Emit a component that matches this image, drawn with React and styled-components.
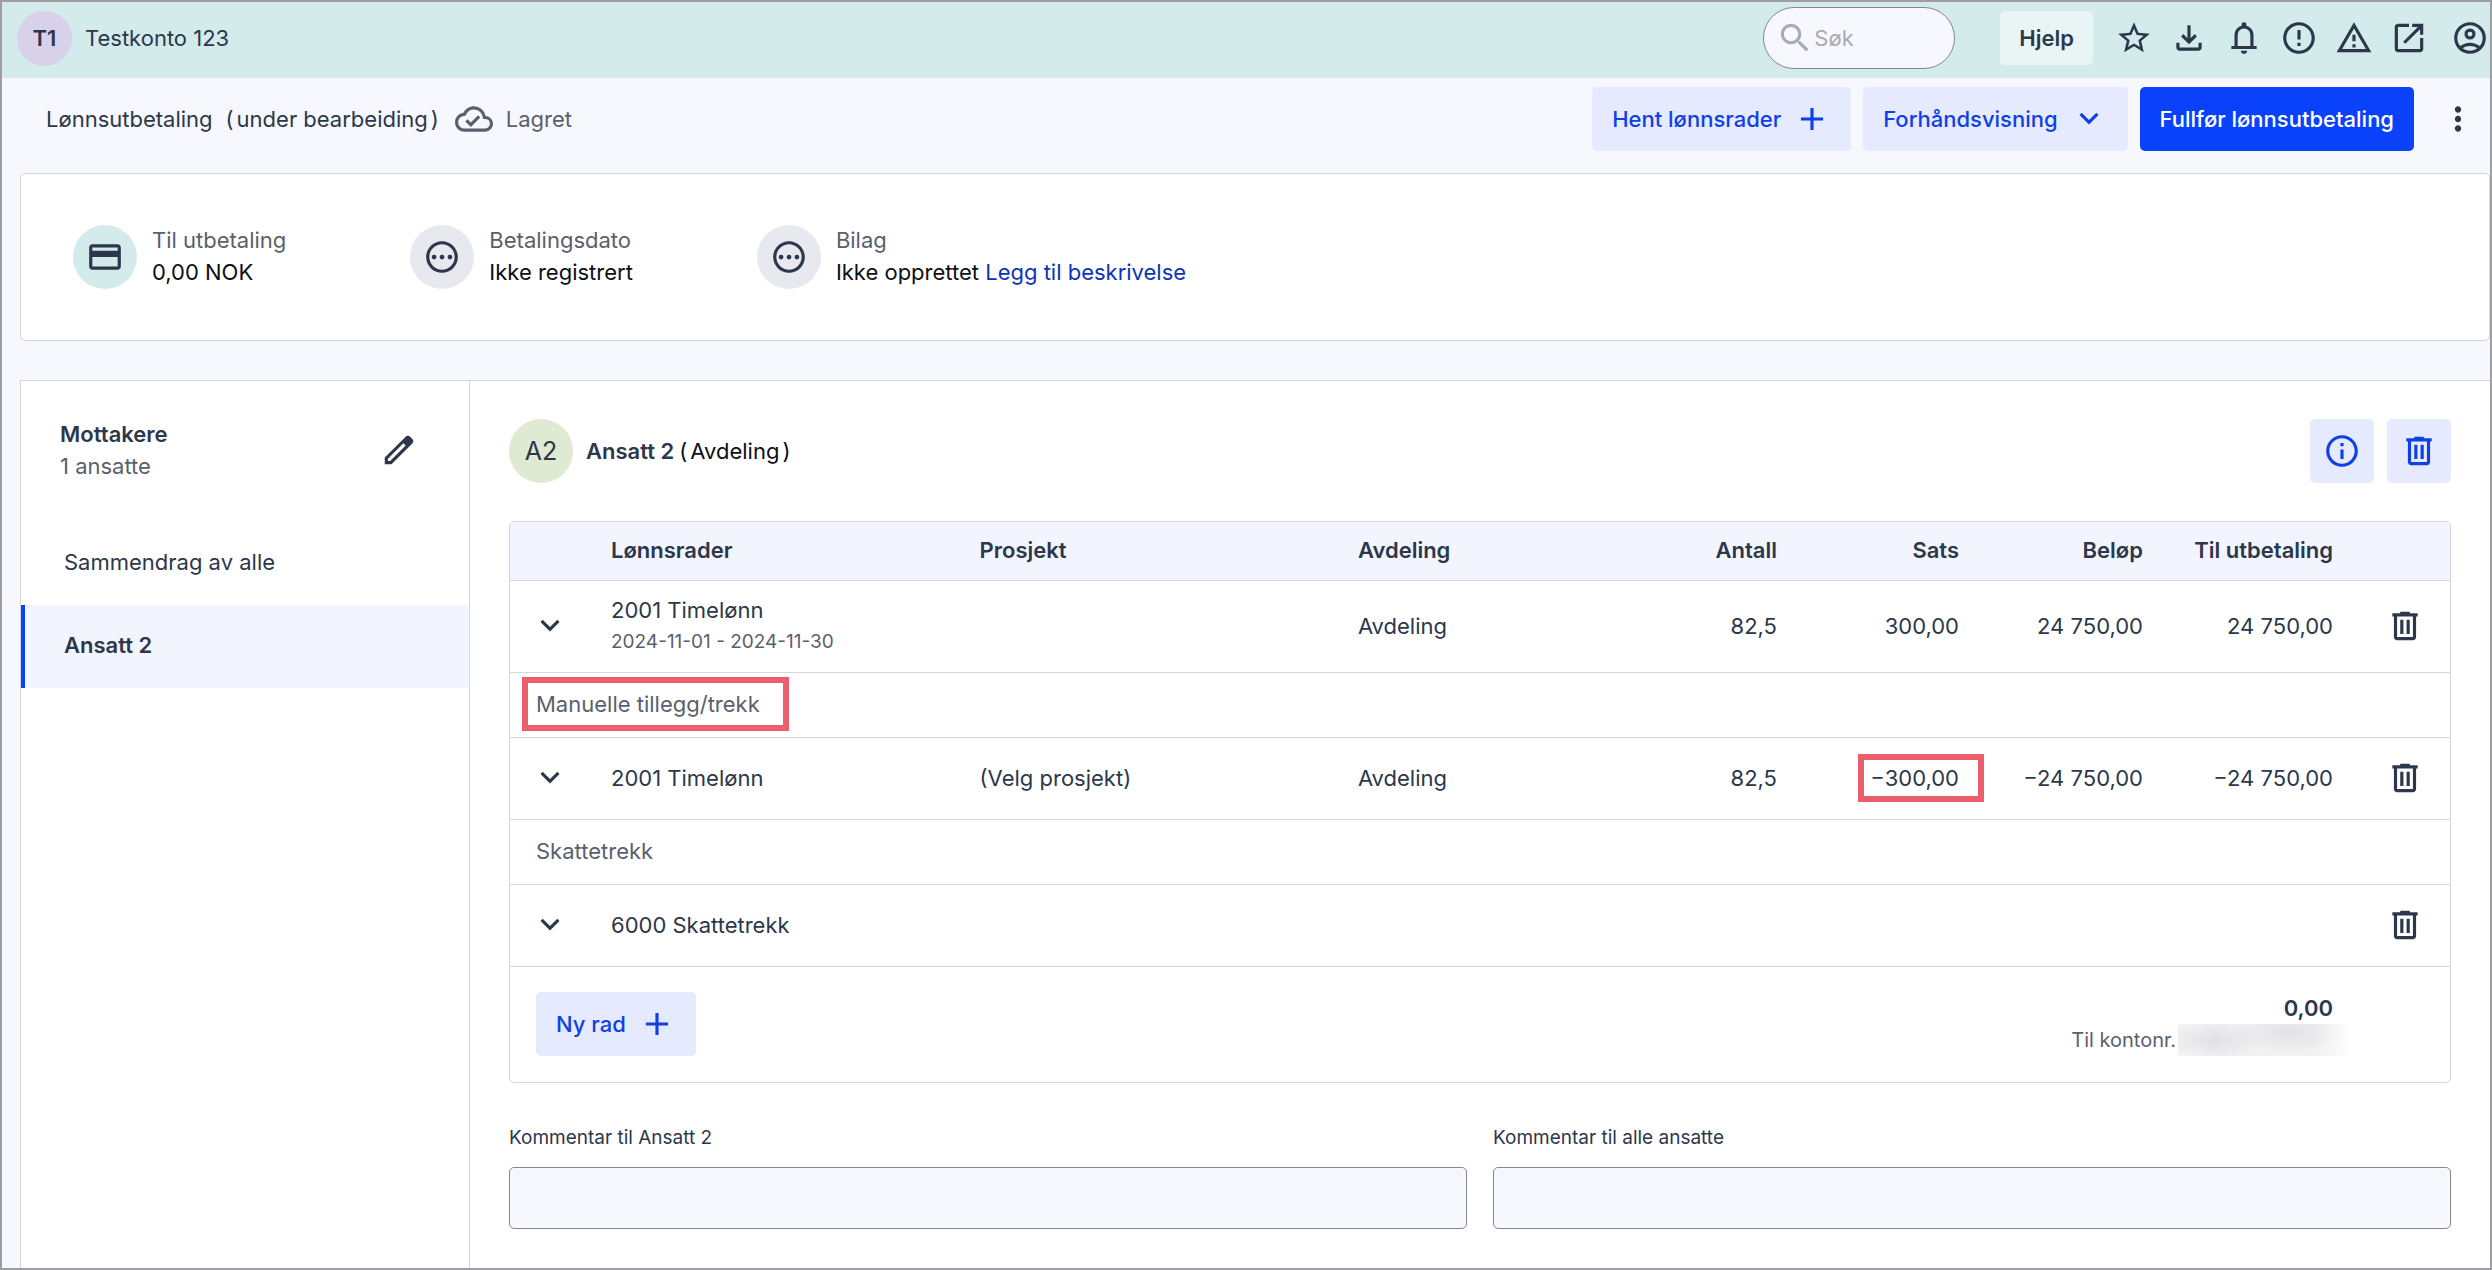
import React from "react";
import styled, { createGlobalStyle, css } from "styled-components";
import {
  MdAdd,
  MdErrorOutline,
  MdInfoOutline,
  MdMoreVert,
  MdOutlineCloudDone,
  MdOutlineCreditCard,
  MdOutlinePending,
  MdSearch,
  MdStarOutline,
  MdOutlineWarningAmber,
} from "react-icons/md";

const c = {
  ink: "#2c374b",
  muted: "#5a5f6d",
  black: "#0d0f14",
  blue: "#0a41fa",
  blueText: "#0f3fe6",
  blueSoft: "#e6eafe",
  line: "#d5d6dc",
  page: "#f7f8fd",
  head: "#f3f5fe",
  mint: "#d3ebea",
  frame: "#9e9da1",
  mark: "#eb5f6c",
};

const GlobalStyle = createGlobalStyle`
  *, *::before, *::after { box-sizing: border-box; }
  body {
    margin: 0;
    background: ${c.page};
    color: ${c.ink};
    font: 400 22px/32px Inter, Roboto, "Noto Sans", sans-serif;
  }
  button, input { font: inherit; color: inherit; }
  button { border: 0; background: none; padding: 0; cursor: pointer; }
  svg { display: block; flex: none; }
`;

const paths = {
  download:
    "M12 16l-5-5 1.4-1.45 2.6 2.6V4h2v8.15l2.6-2.6L17 11l-5 5Zm-6 4q-.825 0-1.413-.587T4 18v-3h2v3h12v-3h2v3q0 .825-.587 1.413T18 20H6Z",
  bell: "M4 19v-2h2v-7q0-2.075 1.25-3.688T10.5 4.2v-.7q0-.625.438-1.062T12 2t1.063.438T13.5 3.5v.7q2 .5 3.25 2.113T18 10v7h2v2H4Zm8 3q-.825 0-1.412-.587T10 20h4q0 .825-.587 1.413T12 22ZM8 17h8v-7q0-1.65-1.175-2.825T12 6T9.175 7.175T8 10v7Z",
  open: "M5 21q-.825 0-1.413-.587T3 19V5q0-.825.588-1.413T5 3h7v2H5v14h14v-7h2v7q0 .825-.587 1.413T19 21H5Zm4.7-5.3-1.4-1.4L17.6 5H14V3h7v7h-2V6.4l-9.3 9.3Z",
  account:
    "M5.85 17.1q1.275-.975 2.85-1.537T12 15t3.3.563T18.15 17.1q.875-1.025 1.363-2.325T20 12q0-3.325-2.337-5.663T12 4T6.338 6.338T4 12q0 1.475.488 2.775T5.85 17.1ZM12 13q-1.475 0-2.488-1.012T8.5 9.5t1.013-2.488T12 6t2.488 1.013T15.5 9.5t-1.012 2.488T12 13Zm0 9q-2.075 0-3.9-.788t-3.175-2.137T2.788 15.9T2 12t.788-3.9t2.137-3.175T8.1 2.788T12 2t3.9.788t3.175 2.137T21.213 8.1T22 12t-.788 3.9t-2.137 3.175t-3.175 2.138T12 22Zm0-2q1.325 0 2.5-.387t2.15-1.113q-.975-.725-2.15-1.112T12 17t-2.5.388T7.35 18.5q.975.725 2.15 1.113T12 20Zm0-9q.65 0 1.075-.425T13.5 9.5t-.425-1.075T12 8t-1.075.425T10.5 9.5t.425 1.075T12 11Z",
  edit: "M5 19h1.425L16.2 9.225 14.775 7.8 5 17.575V19Zm-2 2v-4.25L16.2 3.575q.3-.275.663-.425t.762-.15.775.15.65.45L20.425 5q.3.275.438.65T21 6.4q0 .4-.138.763t-.437.662L7.25 21H3Z",
  trash:
    "M7 21q-.825 0-1.413-.587T5 19V6H4V4h5V3h6v1h5v2h-1v13q0 .825-.587 1.413T17 21H7ZM17 6H7v13h10V6ZM9 17h2V8H9v9Zm4 0h2V8h-2v9Z",
  chevron: "m12 15.4-6-6L7.4 8l4.6 4.6L16.6 8 18 9.4l-6 6Z",
};

const Icon = ({ name, size = 38 }) => (
  <svg width={size} height={size} viewBox="0 0 24 24" fill="currentColor" aria-hidden="true">
    <path d={paths[name]} />
  </svg>
);

const Frame = styled.div`
  min-height: 100vh;
  display: flex;
  flex-direction: column;
  border: 2px solid ${c.frame};
`;

const TopBar = styled.header`
  display: flex;
  align-items: center;
  justify-content: space-between;
  height: 76px;
  padding: 0 1px 4px 15px;
  background: ${c.mint};
`;

const Cluster = styled.div`
  display: flex;
  align-items: center;
  gap: ${(p) => p.$gap || 12}px;
`;

const Avatar = styled.span`
  display: grid;
  place-items: center;
  flex: none;
  width: ${(p) => p.$size}px;
  height: ${(p) => p.$size}px;
  border-radius: 50%;
  background: ${(p) => p.$tint};
  color: ${c.ink};
  font-size: ${(p) => p.$font || 22}px;
  font-weight: ${(p) => p.$weight || 500};
`;

const SearchBox = styled.label`
  display: flex;
  align-items: center;
  width: 192px;
  height: 62px;
  margin-right: 28px;
  padding: 0 12px;
  border: 1px solid #85868f;
  border-radius: 31px;
  background: ${c.page};
  color: #a9abb3;
`;

const SearchInput = styled.input`
  width: 100%;
  min-width: 0;
  padding: 0;
  border: 0;
  outline: 0;
  background: none;
  &::placeholder { color: #a9abb3; opacity: 1; }
`;

const HelpButton = styled.button`
  height: 54px;
  margin-right: 5px;
  padding: 0 19px;
  border-radius: 5px;
  background: #e9f5f5;
  font-weight: 600;
`;

const IconButton = styled.button`
  display: grid;
  place-items: center;
  color: ${c.ink};
  ${(p) => p.$last && css`margin-left: 6px;`}
`;

const SubHeader = styled.div`
  display: flex;
  align-items: center;
  justify-content: space-between;
  padding: 9px 0 0 44px;
`;

const Title = styled.h1`
  margin: 0;
  font-size: 22px;
  line-height: 32px;
  font-weight: 400;
`;

const ParenText = styled.span`
  display: inline-flex;
  gap: 3px;
  color: ${(p) => (p.$dark ? c.black : c.ink)};
`;

const Saved = styled.span`
  display: flex;
  align-items: center;
  gap: 13px;
  color: ${c.muted};
`;

const Button = styled.button`
  display: flex;
  align-items: center;
  gap: 12px;
  height: 64px;
  padding: 0 20px;
  border-radius: 5px;
  background: ${(p) => (p.$primary ? c.blue : c.blueSoft)};
  color: ${(p) => (p.$primary ? "#fff" : c.blueText)};
  font-weight: 500;
  white-space: nowrap;
`;

const SquareButton = styled(Button)`
  justify-content: center;
  width: 64px;
  padding: 0;
  ${(p) => p.$plain && css`background: none; color: ${c.ink};`}
`;

const Summary = styled.section`
  display: flex;
  align-items: center;
  gap: 124px;
  height: 168px;
  margin: 22px 0 39px 18px;
  padding: 0 52px;
  border: 1px solid ${c.line};
  border-radius: 5px;
  background: #fff;
`;

const SummaryText = styled.div`
  padding-bottom: 2px;
`;

const Muted = styled.div`
  color: ${c.muted};
`;

const Strong = styled.div`
  color: ${c.black};
`;

const Link = styled.a`
  color: #0b34b8;
  text-decoration: none;
`;

const Panel = styled.div`
  flex: 1;
  display: grid;
  grid-template-columns: 449px minmax(0, 1fr);
  margin-left: 18px;
  border: solid ${c.line};
  border-width: 1px 0 0 1px;
  background: #fff;
`;

const Sidebar = styled.aside`
  border-right: 1px solid ${c.line};
`;

const SideHead = styled.div`
  display: flex;
  align-items: center;
  justify-content: space-between;
  height: 141px;
  padding: 0 51px 3px 39px;
`;

const Heading = styled.h2`
  margin: 0;
  font-size: 22px;
  line-height: 32px;
  font-weight: 600;
`;

const SideItem = styled.button`
  display: block;
  width: 100%;
  height: 83px;
  padding: 0 39px 3px;
  border-left: 4px solid ${(p) => (p.$active ? c.blue : "transparent")};
  background: ${(p) => (p.$active ? c.head : "none")};
  font-weight: ${(p) => (p.$active ? 600 : 400)};
  text-align: left;
`;

const Content = styled.main`
  padding: 38px 39px;
`;

const EmployeeHead = styled.div`
  display: flex;
  align-items: center;
  justify-content: space-between;
  margin-bottom: 38px;
`;

const TableWrap = styled.div`
  border: 1px solid ${c.line};
  border-radius: 5px;
  overflow: hidden;
`;

const Table = styled.table`
  width: 100%;
  table-layout: fixed;
  border-collapse: collapse;
`;

const cellBase = css`
  padding: 0 17px;
  text-align: ${(p) => (p.$num ? "right" : "left")};
  white-space: nowrap;
`;

const Th = styled.th`
  ${cellBase}
  padding-bottom: 2px;
  background: ${c.head};
  font-weight: 600;
`;

const Td = styled.td`
  ${cellBase}
`;

const GroupCell = styled.td`
  padding: 0 26px 2px;
  color: ${c.muted};
`;

const ExpandCell = styled.td`
  padding: 0 4px 0 0;
`;

const DeleteCell = styled.td`
  padding: 0 0 0 10px;
`;

const Row = styled.tr`
  height: ${(p) => p.$h}px;
  border-bottom: 1px solid ${c.line};
`;

const Small = styled.div`
  color: ${c.muted};
  font-size: 19px;
`;

const Centered = styled.div`
  display: flex;
  justify-content: center;
`;

const Marked = styled.span`
  position: relative;
  &::after {
    content: "";
    position: absolute;
    inset: ${(p) => p.$inset};
    border: 6px solid ${c.mark};
    pointer-events: none;
  }
`;

const TableFoot = styled.div`
  display: flex;
  justify-content: space-between;
  align-items: center;
  height: 115px;
  padding: 0 117px 0 26px;
`;

const Total = styled.div`
  text-align: right;
  font-weight: 600;
`;

const AccountLine = styled.div`
  display: flex;
  align-items: center;
  gap: 2px;
  margin-right: -14px;
  color: ${c.muted};
  font-size: 20px;
  font-weight: 400;
`;

const Redacted = styled.span`
  width: 169px;
  height: 32px;
  background:
    radial-gradient(ellipse 55px 22px at 66% 25%, rgba(222, 222, 226, 0.8), transparent),
    radial-gradient(ellipse 50px 20px at 22% 50%, rgba(222, 222, 226, 0.9), transparent),
    linear-gradient(90deg, #f4f4f5, #f1f1f2 80%, #fcfcfc);
`;

const Comments = styled.div`
  display: grid;
  grid-template-columns: 1fr 1fr;
  gap: 26px;
  margin-top: 39px;
`;

const CommentLabel = styled.label`
  display: block;
  font-size: 19px;
  line-height: 32px;
`;

const CommentInput = styled.input`
  display: block;
  width: 100%;
  height: 62px;
  margin-top: 13px;
  padding: 0 16px;
  border: 1px solid #85868f;
  border-radius: 5px;
  background: ${c.page};
`;

const Paren = ({ dark, children }) => (
  <ParenText $dark={dark}>
    <span>(</span>
    <span>{children}</span>
    <span>)</span>
  </ParenText>
);

const SummaryItem = ({ tint, icon, label, children }) => (
  <Cluster $gap={15}>
    <Avatar $size={64} $tint={tint}>{icon}</Avatar>
    <SummaryText>
      <Muted>{label}</Muted>
      <Strong>{children}</Strong>
    </SummaryText>
  </Cluster>
);

const Expand = () => (
  <ExpandCell>
    <Centered>
      <IconButton aria-label="Vis detaljer"><Icon name="chevron" /></IconButton>
    </Centered>
  </ExpandCell>
);

const Delete = () => (
  <DeleteCell>
    <Centered>
      <IconButton aria-label="Slett rad"><Icon name="trash" /></IconButton>
    </Centered>
  </DeleteCell>
);

const Col = styled.col`
  width: ${(p) => p.$w};
`;

export default function App() {
  return (
    <>
      <GlobalStyle />
      <Frame>
        <TopBar>
          <Cluster $gap={13}>
            <Avatar $size={55} $tint="#d9d1e9" $weight={600}>T1</Avatar>
            <span>Testkonto 123</span>
          </Cluster>
          <Cluster $gap={17}>
            <SearchBox>
              <MdSearch size={38} />
              <SearchInput type="search" placeholder="Søk" aria-label="Søk" />
            </SearchBox>
            <HelpButton>Hjelp</HelpButton>
            <IconButton aria-label="Favoritter"><MdStarOutline size={38} /></IconButton>
            <IconButton aria-label="Last ned"><Icon name="download" /></IconButton>
            <IconButton aria-label="Varsler"><Icon name="bell" /></IconButton>
            <IconButton aria-label="Meldinger"><MdErrorOutline size={38} /></IconButton>
            <IconButton aria-label="Advarsler"><MdOutlineWarningAmber size={38} /></IconButton>
            <IconButton aria-label="Åpne"><Icon name="open" /></IconButton>
            <IconButton $last aria-label="Konto"><Icon name="account" /></IconButton>
          </Cluster>
        </TopBar>

        <SubHeader>
          <Cluster $gap={16}>
            <Cluster $gap={13}>
              <Title>Lønnsutbetaling</Title>
              <Paren>under bearbeiding</Paren>
            </Cluster>
            <Saved><MdOutlineCloudDone size={38} />Lagret</Saved>
          </Cluster>
          <Cluster $gap={12}>
            <Button>Hent lønnsrader<MdAdd size={38} /></Button>
            <Button>Forhåndsvisning<Icon name="chevron" /></Button>
            <Button $primary>Fullfør lønnsutbetaling</Button>
            <SquareButton $plain aria-label="Flere valg"><MdMoreVert size={38} /></SquareButton>
          </Cluster>
        </SubHeader>

        <Summary>
          <SummaryItem tint={c.mint} icon={<MdOutlineCreditCard size={38} />} label="Til utbetaling">
            0,00 NOK
          </SummaryItem>
          <SummaryItem tint="#e8e9ee" icon={<MdOutlinePending size={38} />} label="Betalingsdato">
            Ikke registrert
          </SummaryItem>
          <SummaryItem tint="#e8e9ee" icon={<MdOutlinePending size={38} />} label="Bilag">
            Ikke opprettet <Link href="#beskrivelse">Legg til beskrivelse</Link>
          </SummaryItem>
        </Summary>

        <Panel>
          <Sidebar>
            <SideHead>
              <div>
                <Heading>Mottakere</Heading>
                <Muted>1 ansatte</Muted>
              </div>
              <IconButton aria-label="Rediger mottakere"><Icon name="edit" /></IconButton>
            </SideHead>
            <SideItem>Sammendrag av alle</SideItem>
            <SideItem $active>Ansatt 2</SideItem>
          </Sidebar>

          <Content>
            <EmployeeHead>
              <Cluster $gap={13}>
                <Avatar $size={64} $tint="#dfead3" $font={25} $weight={400}>A2</Avatar>
                <Cluster $gap={5}>
                  <Heading>Ansatt 2</Heading>
                  <Paren dark>Avdeling</Paren>
                </Cluster>
              </Cluster>
              <Cluster $gap={13}>
                <SquareButton aria-label="Informasjon"><MdInfoOutline size={38} /></SquareButton>
                <SquareButton aria-label="Slett ansatt"><Icon name="trash" /></SquareButton>
              </Cluster>
            </EmployeeHead>

            <TableWrap>
              <Table>
                <colgroup>
                  <Col $w="84px" />
                  <Col $w="19%" />
                  <Col $w="19.5%" />
                  <Col $w="auto" />
                  <Col $w="182px" />
                  <Col $w="182px" />
                  <Col $w="184px" />
                  <Col $w="190px" />
                  <Col $w="100px" />
                </colgroup>
                <thead>
                  <Row $h={58}>
                    <Th aria-label="Detaljer" />
                    <Th>Lønnsrader</Th>
                    <Th>Prosjekt</Th>
                    <Th>Avdeling</Th>
                    <Th $num>Antall</Th>
                    <Th $num>Sats</Th>
                    <Th $num>Beløp</Th>
                    <Th $num>Til utbetaling</Th>
                    <Th aria-label="Handlinger" />
                  </Row>
                </thead>
                <tbody>
                  <Row $h={92}>
                    <Expand />
                    <Td>
                      <div>2001 Timelønn</div>
                      <Small>2024-11-01 - 2024-11-30</Small>
                    </Td>
                    <Td />
                    <Td>Avdeling</Td>
                    <Td $num>82,5</Td>
                    <Td $num>300,00</Td>
                    <Td $num>24 750,00</Td>
                    <Td $num>24 750,00</Td>
                    <Delete />
                  </Row>
                  <Row $h={65}>
                    <GroupCell colSpan={9}>
                      <Marked $inset="-14px -29px -14px -14px">Manuelle tillegg/trekk</Marked>
                    </GroupCell>
                  </Row>
                  <Row $h={82}>
                    <Expand />
                    <Td>2001 Timelønn</Td>
                    <Td>(Velg prosjekt)</Td>
                    <Td>Avdeling</Td>
                    <Td $num>82,5</Td>
                    <Td $num><Marked $inset="-11px -25px -11px -12px">−300,00</Marked></Td>
                    <Td $num>−24 750,00</Td>
                    <Td $num>−24 750,00</Td>
                    <Delete />
                  </Row>
                  <Row $h={65}>
                    <GroupCell colSpan={9}>Skattetrekk</GroupCell>
                  </Row>
                  <Row $h={82}>
                    <Expand />
                    <Td colSpan={7}>6000 Skattetrekk</Td>
                    <Delete />
                  </Row>
                </tbody>
              </Table>
              <TableFoot>
                <Button>Ny rad<MdAdd size={38} /></Button>
                <Total>
                  <div>0,00</div>
                  <AccountLine>Til kontonr.<Redacted /></AccountLine>
                </Total>
              </TableFoot>
            </TableWrap>

            <Comments>
              <div>
                <CommentLabel htmlFor="comment-one">Kommentar til Ansatt 2</CommentLabel>
                <CommentInput id="comment-one" type="text" />
              </div>
              <div>
                <CommentLabel htmlFor="comment-all">Kommentar til alle ansatte</CommentLabel>
                <CommentInput id="comment-all" type="text" />
              </div>
            </Comments>
          </Content>
        </Panel>
      </Frame>
    </>
  );
}
